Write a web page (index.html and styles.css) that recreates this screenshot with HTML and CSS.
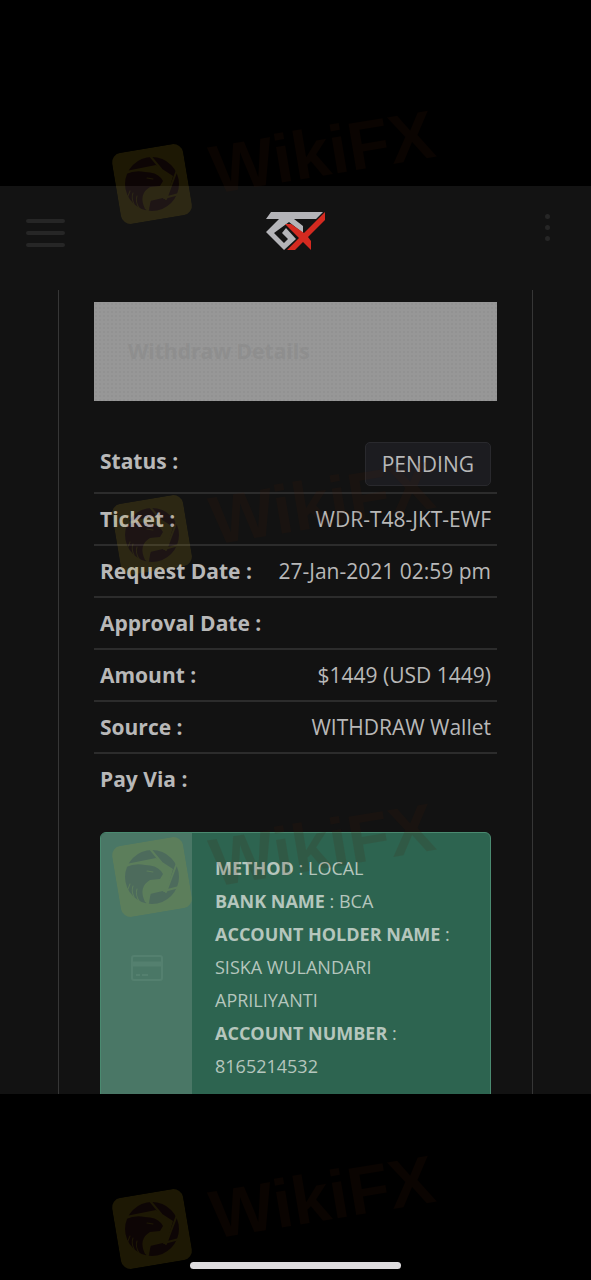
FILE: index.html
```
<!DOCTYPE html>
<html lang="en">

<head>
  <meta charset="UTF-8" />
  <meta name="viewport" content="width=device-width, initial-scale=1.0" />
  <title>Withdraw Details</title>
  <link rel="stylesheet" href="styles.css">
</head>

<body>

  <!-- shared shapes -->
  <svg class="defs" aria-hidden="true">
    <symbol id="eagle" viewBox="0 0 72 72">
      <rect width="72" height="72" rx="10" fill="#c9a81e" />
      <g transform="rotate(9.5 36 36)" stroke="#c9a81e" stroke-linecap="round" fill="none">
        <circle cx="36" cy="36" r="27" fill="#602424" stroke="none" />
        <path d="M10 23 L40 17 L57 28 L51 49 L34 53 L33 63 L29 61 Q22 46 34 39 L44 38 L47 33 L45 30 Q40 24 29 24 Q19 22 10 26Z" fill="#c9a81e" stroke="none" />
        <path d="M35 9 L45 21 M61 22 L50 51 M48 50 L63 46 M34 52 L31 63" stroke-width="2" />
        <path d="M18 56 Q15 50 17 45 M23 60 Q19 53 21 48 M12 48 L14 43" stroke-width="1" />
        <path d="M31 30 L37 31" stroke-width="1" />
      </g>
    </symbol>
  </svg>

  <div class="phone">

    <main class="screen">
      <header class="header">
        <button class="menu-btn" aria-label="Menu">
          <span></span>
          <span></span>
          <span></span>
        </button>
        <a class="logo" href="#" aria-label="Home">
          <svg viewBox="0 0 60 40" width="60" height="40">
            <path fill="#b4b4b8" d="M5 1 H57 L50 8 H28 L37 15 V22 L23 11 L8 22 L18 32 L22 28 L16 22 L20 17 L30 28 L18 39 L0 21 L13 8 H0Z" />
            <path fill="#d42a20" d="M59 1 V9 L42 26 L45 30 V39 L37 31 L29 39 H21 L33 27 L19 13 H25 L38 22Z" />
          </svg>
        </a>
        <button class="more-btn" aria-label="More">
          <span></span>
          <span></span>
          <span></span>
        </button>
      </header>

      <div class="container">
        <div class="banner">
          <h2>Withdraw Details</h2>
        </div>

        <dl class="details">
          <div class="row status-row">
            <dt>Status :</dt>
            <dd><span class="badge">PENDING</span></dd>
          </div>
          <div class="row">
            <dt>Ticket :</dt>
            <dd>WDR-T48-JKT-EWF</dd>
          </div>
          <div class="row">
            <dt>Request Date :</dt>
            <dd>27-Jan-2021 02:59 pm</dd>
          </div>
          <div class="row">
            <dt>Approval Date :</dt>
            <dd></dd>
          </div>
          <div class="row">
            <dt>Amount :</dt>
            <dd>$1449 (USD 1449)</dd>
          </div>
          <div class="row">
            <dt>Source :</dt>
            <dd>WITHDRAW Wallet</dd>
          </div>
          <div class="row">
            <dt>Pay Via :</dt>
            <dd></dd>
          </div>
        </dl>

        <div class="pay-card">
          <div class="pay-icon">
            <svg viewBox="0 0 32 26" width="32" height="26" fill="none" stroke="#54806f" stroke-width="2">
              <rect x="1" y="1" width="30" height="24" rx="2" />
              <path d="M1 9 H31" stroke-width="5" />
              <path d="M5 20 H9 M11 20 H17" />
            </svg>
          </div>
          <div class="pay-info">
            <p><b>METHOD</b> : LOCAL</p>
            <p><b>BANK NAME</b> : BCA</p>
            <p><b>ACCOUNT HOLDER NAME</b> : SISKA WULANDARI APRILIYANTI</p>
            <p><b>ACCOUNT NUMBER</b> : 8165214532</p>
          </div>
        </div>
      </div>
    </main>

    <div class="home-indicator"></div>

    <!-- watermarks over the page -->
    <div class="watermark mark-1"><svg><use href="#eagle" /></svg><span>WikiFX</span></div>
    <div class="watermark mark-2"><svg><use href="#eagle" /></svg><span>WikiFX</span></div>
    <div class="watermark mark-3"><svg><use href="#eagle" /></svg><span>WikiFX</span></div>
    <div class="watermark mark-4"><svg><use href="#eagle" /></svg><span>WikiFX</span></div>
  </div>

</body>

</html>
```

FILE: styles.css
```
* {
  box-sizing: border-box;
}

body {
  margin: 0;
  font-family: 'Open Sans', 'Noto Sans', sans-serif;
  font-size: 21px;
  background-color: #000;
  color: #b8b8b8;
}

.defs {
  position: absolute;
  width: 0;
  height: 0;
}

.phone {
  position: relative;
  display: flex;
  flex-direction: column;
  min-height: 100vh;
  padding: 186px 0 11px;
  overflow: hidden;
}

.screen {
  background-color: #121212;
}

.header {
  display: flex;
  justify-content: space-between;
  align-items: flex-start;
  height: 104px;
  padding: 25px 26px 0;
  background-color: #131313;
}

.menu-btn,
.more-btn {
  display: flex;
  flex-direction: column;
  padding: 0;
  border: none;
  background: transparent;
  cursor: pointer;
}

.menu-btn {
  width: 39px;
  gap: 8px;
  padding-top: 8px;
}

.menu-btn span {
  height: 4px;
  border-radius: 2px;
  background-color: #262626;
}

.more-btn {
  width: 39px;
  align-items: center;
  gap: 6px;
  padding: 3px 0 0 4px;
}

.more-btn span {
  width: 5px;
  height: 5px;
  border-radius: 50%;
  background-color: #262626;
}

.logo svg {
  display: block;
}

.container {
  display: flex;
  flex-direction: column;
  margin: 0 58px;
  padding: 12px 35px 0;
  border: solid #363636;
  border-width: 0 1px;
  overflow: hidden;
}

.banner {
  padding: 32px 34px;
  background-color: #979797;
  background-image: radial-gradient(#929292 1px, transparent 1px);
  background-size: 4px 4px;
}

.banner h2 {
  margin: 0;
  font-size: 21px;
  line-height: 35px;
  color: #8e8e8e;
}

.details {
  margin: 35px 0 0;
}

.row {
  display: flex;
  justify-content: space-between;
  padding: 0 6px;
  line-height: 50px;
  border-top: 2px solid #2c2c2c;
}

.status-row {
  border-top: none;
}

dt {
  font-weight: bold;
}

dd {
  margin: 0;
}

.badge {
  display: block;
  margin: 6px 0;
  padding: 0 16px;
  line-height: 42px;
  border: 1px solid #29292d;
  border-radius: 5px;
  background-color: #1c1c20;
}

.pay-card {
  display: flex;
  margin: 28px 6px -9px;
  border: 1px solid #4a8a70;
  border-radius: 6px;
  background-color: #2d6450;
  overflow: hidden;
}

.pay-icon {
  display: flex;
  justify-content: center;
  align-items: center;
  width: 91px;
  background-color: #4a7766;
}

.pay-info {
  flex: 1;
  padding: 19px 23px;
  font-size: 18px;
  line-height: 33px;
  color: #b5c6bd;
}

.pay-info p {
  margin: 0;
}

.pay-info b {
  font-weight: 700;
}

.home-indicator {
  width: 211px;
  height: 7px;
  margin: auto auto 0;
  border-radius: 4px;
  background-color: #dedcde;
}

.watermark {
  position: absolute;
  left: 116px;
  display: flex;
  align-items: center;
  gap: 24px;
  height: 72px;
  font: bold 68px/60px 'Liberation Sans', Arial, sans-serif;
  color: #481c08;
  opacity: 0.14;
  transform: rotate(-9.5deg);
  transform-origin: 36px 36px;
  pointer-events: none;
}

.watermark svg {
  width: 72px;
  height: 72px;
}

.watermark span {
  padding-bottom: 8px;
}

.mark-1 {
  top: 148px;
}

.mark-2 {
  top: 499px;
}

.mark-3 {
  top: 841px;
}

.mark-4 {
  top: 1193px;
}
```
